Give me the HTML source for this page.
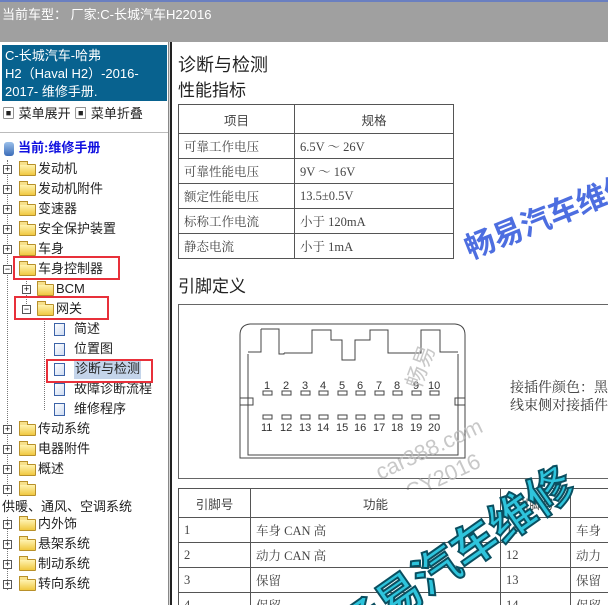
<!DOCTYPE html>
<html style="overflow:hidden"><head><meta charset="utf-8"><style>
*{margin:0;padding:0;box-sizing:border-box}
html,body{width:608px;height:605px;overflow:hidden}
body{background:#fff;font-family:"Liberation Sans","Noto Sans CJK SC",sans-serif;position:relative}
.top{position:absolute;left:0;top:0;width:608px;height:42px;background:#a0a0a0;border-top:2px solid #6a7fc0}
.top span{position:absolute;left:2px;top:2px;color:#fff;font-size:13px}
.left{position:absolute;left:0;top:42px;width:168px;height:563px;background:#fff}
.blue{position:absolute;left:2px;top:3px;width:165px;height:56px;background:#08628f;color:#fff;font-size:13px;line-height:18px;padding:2px 3px}
.div{position:absolute;left:168px;top:42px;width:4px;height:563px;background:#d8d8d8;border-left:1px solid #888;border-right:2px solid #222}
.r{position:absolute;font-size:13px;color:#222;white-space:nowrap;height:20px;line-height:20px}
.pl{position:absolute;width:9px;height:9px;border:1px solid #555;background:#fff;font-size:9px;line-height:7px;text-align:center;color:#000}
.fd{position:absolute;width:17px;height:12px;background:linear-gradient(#fff3b0,#f0c840);border:1px solid #b8902a;border-radius:1px}
.fd:before{content:"";position:absolute;left:-1px;top:-4px;width:7px;height:3px;background:#f7e08a;border:1px solid #b8902a;border-bottom:none}
.pg{position:absolute;width:11px;height:13px;background:linear-gradient(135deg,#fff,#cfdcf2);border:1px solid #3c63a8}
.vd{position:absolute;border-left:1px dotted #777}
.red{position:absolute;border:2px solid #e8303a}
.c{position:absolute;left:172px;top:42px;width:436px;height:563px;background:#fff;overflow:hidden}
table{border-collapse:collapse;position:absolute}
td{border:1px solid #555;font-family:"Liberation Serif","Noto Serif CJK SC",serif;font-size:12.5px;color:#444;padding:0 5px;height:25px}
</style></head><body>
<div class="top"><span>当前车型：&nbsp;厂家:C-长城汽车H22016</span></div>
<div class="left">
<div class="blue">C-长城汽车-哈弗<br>H2（Haval H2）-2016-<br>2017- 维修手册.</div>
<div class="r" style="left:2px;top:62px">▣ 菜单展开 ▣ 菜单折叠</div>
<div style="position:absolute;left:0;top:90px;width:168px;border-top:1px solid #bbb"></div>
</div>
<div class="r" style="left:4px;top:138px;color:#1010e0;font-weight:bold"><span style="display:inline-block;width:10px;height:14px;background:linear-gradient(#9bc0ea,#3a6cb8);border-radius:3px;vertical-align:middle;margin-right:4px"></span>当前:维修手册</div>
<div class="vd" style="left:7px;top:160px;height:430px"></div>

<div class="pl" style="left:3px;top:165px">+</div><div class="fd" style="left:19px;top:164px"></div><div class="r" style="left:38px;top:159px">发动机</div>
<div class="pl" style="left:3px;top:185px">+</div><div class="fd" style="left:19px;top:184px"></div><div class="r" style="left:38px;top:179px">发动机附件</div>
<div class="pl" style="left:3px;top:205px">+</div><div class="fd" style="left:19px;top:204px"></div><div class="r" style="left:38px;top:199px">变速器</div>
<div class="pl" style="left:3px;top:225px">+</div><div class="fd" style="left:19px;top:224px"></div><div class="r" style="left:38px;top:219px">安全保护装置</div>
<div class="pl" style="left:3px;top:245px">+</div><div class="fd" style="left:19px;top:244px"></div><div class="r" style="left:38px;top:239px">车身</div>
<div class="pl" style="left:3px;top:265px">−</div><div class="fd" style="left:19px;top:264px"></div><div class="r" style="left:38px;top:259px">车身控制器</div>
<div class="vd" style="left:26px;top:278px;height:36px"></div>
<div class="pl" style="left:22px;top:285px">+</div><div class="fd" style="left:37px;top:284px"></div><div class="r" style="left:56px;top:279px">BCM</div>
<div class="pl" style="left:22px;top:305px">−</div><div class="fd" style="left:37px;top:304px"></div><div class="r" style="left:56px;top:299px">网关</div>
<div class="vd" style="left:44px;top:318px;height:92px"></div>
<div class="pg" style="left:54px;top:323px"></div><div class="r" style="left:74px;top:319px">简述</div>
<div class="pg" style="left:54px;top:343px"></div><div class="r" style="left:74px;top:339px">位置图</div>
<div class="pg" style="left:54px;top:363px"></div><div class="r" style="left:74px;top:359px;background:#c4d4ea;padding:0 1px">诊断与检测</div>
<div class="pg" style="left:54px;top:383px"></div><div class="r" style="left:74px;top:379px">故障诊断流程</div>
<div class="pg" style="left:54px;top:403px"></div><div class="r" style="left:74px;top:399px">维修程序</div>
<div class="pl" style="left:3px;top:425px">+</div><div class="fd" style="left:19px;top:424px"></div><div class="r" style="left:38px;top:419px">传动系统</div>
<div class="pl" style="left:3px;top:445px">+</div><div class="fd" style="left:19px;top:444px"></div><div class="r" style="left:38px;top:439px">电器附件</div>
<div class="pl" style="left:3px;top:465px">+</div><div class="fd" style="left:19px;top:464px"></div><div class="r" style="left:38px;top:459px">概述</div>
<div class="pl" style="left:3px;top:485px">+</div><div class="fd" style="left:19px;top:484px"></div>
<div class="r" style="left:2px;top:497px;background:#fff">供暖、通风、空调系统</div>
<div class="pl" style="left:3px;top:520px">+</div><div class="fd" style="left:19px;top:519px"></div><div class="r" style="left:38px;top:514px">内外饰</div>
<div class="pl" style="left:3px;top:540px">+</div><div class="fd" style="left:19px;top:539px"></div><div class="r" style="left:38px;top:534px">悬架系统</div>
<div class="pl" style="left:3px;top:560px">+</div><div class="fd" style="left:19px;top:559px"></div><div class="r" style="left:38px;top:554px">制动系统</div>
<div class="pl" style="left:3px;top:580px">+</div><div class="fd" style="left:19px;top:579px"></div><div class="r" style="left:38px;top:574px">转向系统</div>

<div class="red" style="left:13px;top:256px;width:107px;height:24px"></div>
<div class="red" style="left:14px;top:296px;width:95px;height:24px"></div>
<div class="red" style="left:46px;top:359px;width:107px;height:24px"></div>

<div class="div"></div>
<div class="c">
<div style="position:absolute;left:6px;top:9px;font-size:18px;color:#222">诊断与检测</div>
<div style="position:absolute;left:6px;top:34px;font-size:17px;color:#222">性能指标</div>
<table style="left:6px;top:62px;width:276px">
<tr><td style="width:116px;text-align:center;font-family:'Liberation Sans','Noto Sans CJK SC',sans-serif;height:29px">项目</td><td style="text-align:center;font-family:'Liberation Sans','Noto Sans CJK SC',sans-serif">规格</td></tr>
<tr><td>可靠工作电压</td><td>6.5V ～ 26V</td></tr>
<tr><td>可靠性能电压</td><td>9V ～ 16V</td></tr>
<tr><td>额定性能电压</td><td>13.5±0.5V</td></tr>
<tr><td>标称工作电流</td><td>小于 120mA</td></tr>
<tr><td>静态电流</td><td>小于 1mA</td></tr>
</table>
<div style="position:absolute;left:6px;top:230px;font-size:17px;color:#222">引脚定义</div>
<div style="position:absolute;left:6px;top:262px;width:440px;height:175px;border:1px solid #666"></div>
<svg style="position:absolute;left:0;top:248px" width="436" height="200" viewBox="172 290 436 200">
<g fill="none" stroke="#444" stroke-width="1">
<path d="M240 335 Q240 325 250 324 L455 324 Q465 325 465 335 L465 458 L240 458 Z"/>
<path d="M248 354 L248 455 L458 455 L458 354"/>
<path d="M261 329 L261 352 L248 352 M261 329 L279 329 L279 354 L284 354 L284 353 M284 353 L312 353 L312 330 L331 330 L331 340 L342 340 L342 360 L355 360 L355 340 L370 340 L370 330 L388 330 L388 353 L421 353 L421 330 L440 330 L440 352 L458 352"/>
<path d="M240 405 L253 405 L253 398 L240 398 M465 398 L455 398 L455 405 L465 405"/>
</g>
<g fill="#fff" stroke="#444">
<rect x="263" y="391" width="9" height="4"/><rect x="282" y="391" width="9" height="4"/><rect x="301" y="391" width="9" height="4"/><rect x="319" y="391" width="9" height="4"/><rect x="338" y="391" width="9" height="4"/><rect x="356" y="391" width="9" height="4"/><rect x="375" y="391" width="9" height="4"/><rect x="393" y="391" width="9" height="4"/><rect x="412" y="391" width="9" height="4"/><rect x="430" y="391" width="9" height="4"/>
<rect x="263" y="415" width="9" height="4"/><rect x="282" y="415" width="9" height="4"/><rect x="301" y="415" width="9" height="4"/><rect x="319" y="415" width="9" height="4"/><rect x="338" y="415" width="9" height="4"/><rect x="356" y="415" width="9" height="4"/><rect x="375" y="415" width="9" height="4"/><rect x="393" y="415" width="9" height="4"/><rect x="412" y="415" width="9" height="4"/><rect x="430" y="415" width="9" height="4"/>
</g>
<g font-family="Liberation Sans" font-size="11" fill="#333">
<text x="264" y="389">1</text><text x="283" y="389">2</text><text x="302" y="389">3</text><text x="320" y="389">4</text><text x="339" y="389">5</text><text x="357" y="389">6</text><text x="376" y="389">7</text><text x="394" y="389">8</text><text x="413" y="389">9</text><text x="428" y="389">10</text>
<text x="261" y="431">11</text><text x="280" y="431">12</text><text x="299" y="431">13</text><text x="317" y="431">14</text><text x="336" y="431">15</text><text x="354" y="431">16</text><text x="373" y="431">17</text><text x="391" y="431">18</text><text x="410" y="431">19</text><text x="428" y="431">20</text>
</g>
<text x="510" y="392" font-family="Liberation Serif,Noto Serif CJK SC" font-size="14" fill="#333">接插件颜色：黑</text>
<text x="510" y="410" font-family="Liberation Serif,Noto Serif CJK SC" font-size="14" fill="#333">线束侧对接插件</text>
<g font-family="Liberation Sans,Noto Sans CJK SC" fill="#bbb" opacity="0.8">
<text x="420" y="390" font-size="22" transform="rotate(-70 420 390)">畅易</text>
<text x="380" y="480" font-size="22" transform="rotate(-25 380 480)">car388.com</text>
<text x="410" y="500" font-size="22" transform="rotate(-25 410 500)">CY2016</text>
</g>
</svg>
<table style="left:6px;top:446px;width:450px">
<tr><td style="width:72px;text-align:center;font-family:'Liberation Sans','Noto Sans CJK SC',sans-serif;height:29px">引脚号</td><td style="width:250px;text-align:center;font-family:'Liberation Sans','Noto Sans CJK SC',sans-serif">功能</td><td style="width:70px;text-align:center;font-family:'Liberation Sans','Noto Sans CJK SC',sans-serif">引脚号</td><td></td></tr>
<tr><td>1</td><td>车身 CAN 高</td><td>11</td><td>车身</td></tr>
<tr><td>2</td><td>动力 CAN 高</td><td>12</td><td>动力</td></tr>
<tr><td>3</td><td>保留</td><td>13</td><td>保留</td></tr>
<tr><td>4</td><td>保留</td><td>14</td><td>保留</td></tr>
</table>
<div style="position:absolute;left:285px;top:185px;font-size:30px;font-weight:bold;color:#4d6ee0;transform:rotate(-22deg);transform-origin:left top;white-space:nowrap;font-family:'Noto Sans CJK SC',sans-serif">畅易汽车维修</div>
<div style="position:absolute;left:150px;top:565px;font-size:46px;font-weight:bold;color:#2ec4dc;-webkit-text-stroke:2px #0a4f60;transform:rotate(-35deg);transform-origin:left top;white-space:nowrap;font-family:'Noto Sans CJK SC',sans-serif">畅易汽车维修</div>
</div>
</body></html>
